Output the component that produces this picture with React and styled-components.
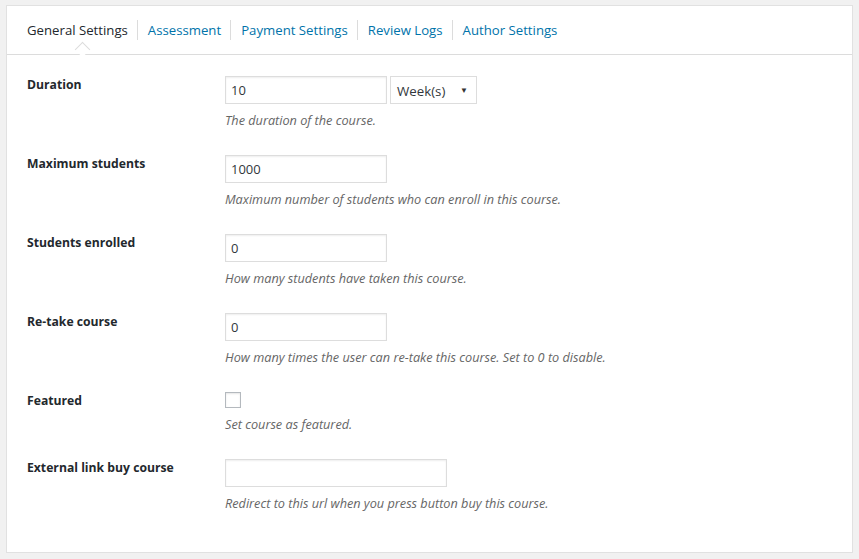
import React from "react";
import styled, { createGlobalStyle } from "styled-components";

const GlobalStyle = createGlobalStyle`
  html, body {
    margin: 0;
    padding: 0;
    background: #f1f1f1;
    font-family: "Open Sans", "Noto Sans", sans-serif;
  }
`;

const Page = styled.div`
  padding: 5px 6px 0 6px;
  width: 847px;
`;

const Box = styled.div`
  background: #fff;
  border: 1px solid #e1e1e1;
  height: 546px;
  box-sizing: content-box;
`;

const Tabs = styled.ul`
  display: flex;
  align-items: center;
  margin: 0;
  padding: 0 0 0 20px;
  height: 48px;
  border-bottom: 1px solid #dcdcdc;
  list-style: none;
`;

const Tab = styled.li`
  position: relative;
  font-size: 13.2px;
  line-height: 20px;
  padding: 0 ${(p) => (p.$last ? 0 : 9)}px 0 ${(p) => (p.$first ? 0 : 10)}px;
  border-left: ${(p) => (p.$first ? "none" : "1px solid #dcdcdc")};
  color: ${(p) => (p.$active ? "#23282d" : "#0073aa")};
  cursor: pointer;
`;

const Notch = styled.span`
  position: absolute;
  left: 50%;
  bottom: -15px;
  width: 10px;
  height: 10px;
  margin-left: -5px;
  background: #fff;
  border-left: 1px solid #dcdcdc;
  border-top: 1px solid #dcdcdc;
  transform: rotate(45deg);
`;

const Form = styled.div`
  padding: 9px 20px 0 20px;
`;

const Row = styled.div`
  display: grid;
  grid-template-columns: 198px 1fr;
  padding: 12px 0 13px 0;
`;

const Label = styled.div`
  font-size: 12.2px;
  font-weight: 700;
  line-height: 16px;
  color: #23282d;
  padding-top: 1px;
`;

const Field = styled.div`
  display: flex;
  flex-direction: column;
  align-items: flex-start;
`;

const Controls = styled.div`
  display: flex;
  gap: 3px;
`;

const Input = styled.div`
  box-sizing: border-box;
  width: ${(p) => p.$w}px;
  height: 28px;
  border: 1px solid #dddddd;
  box-shadow: inset 0 1px 2px rgba(0, 0, 0, 0.07);
  padding: 0 5px;
  font-size: 13px;
  line-height: 27px;
  color: #32373c;
  background: #fff;
`;

const Select = styled.div`
  box-sizing: border-box;
  width: 87px;
  height: 28px;
  border: 1px solid #dddddd;
  padding: 1px 8px 0 6px;
  display: flex;
  align-items: center;
  justify-content: space-between;
  font-size: 13.3px;
  color: #32373c;
  background: #fff;
`;

const Caret = styled.span`
  font-size: 8px;
  color: #333;
  margin-top: -3px;
`;

const Checkbox = styled.div`
  box-sizing: border-box;
  width: 16px;
  height: 16px;
  border: 1px solid #b4b9be;
  box-shadow: inset 0 1px 2px rgba(0, 0, 0, 0.1);
  background: #fff;
`;

const Desc = styled.p`
  margin: 7px 0 0 0;
  font-size: 12.7px;
  line-height: 19px;
  font-style: italic;
  color: #666;
`;

const tabs = [
  "General Settings",
  "Assessment",
  "Payment Settings",
  "Review Logs",
  "Author Settings",
];

const fields = [
  { label: "Maximum students", value: "1000", desc: "Maximum number of students who can enroll in this course." },
  { label: "Students enrolled", value: "0", desc: "How many students have taken this course." },
  { label: "Re-take course", value: "0", desc: "How many times the user can re-take this course. Set to 0 to disable." },
];

const App = () => {
  return (
    <Page>
      <GlobalStyle />
      <Box>
        <Tabs>
          {tabs.map((t, i) => (
            <Tab key={t} $first={i === 0} $last={i === tabs.length - 1} $active={i === 0}>
              {t}
              {i === 0 && <Notch />}
            </Tab>
          ))}
        </Tabs>
        <Form>
          <Row>
            <Label>Duration</Label>
            <Field>
              <Controls>
                <Input $w={162}>10</Input>
                <Select>
                  Week(s)
                  <Caret>▼</Caret>
                </Select>
              </Controls>
              <Desc>The duration of the course.</Desc>
            </Field>
          </Row>
          {fields.map((f) => (
            <Row key={f.label}>
              <Label>{f.label}</Label>
              <Field>
                <Input $w={162}>{f.value}</Input>
                <Desc>{f.desc}</Desc>
              </Field>
            </Row>
          ))}
          <Row>
            <Label>Featured</Label>
            <Field>
              <Checkbox />
              <Desc>Set course as featured.</Desc>
            </Field>
          </Row>
          <Row>
            <Label>External link buy course</Label>
            <Field>
              <Input $w={222} />
              <Desc>Redirect to this url when you press button buy this course.</Desc>
            </Field>
          </Row>
        </Form>
      </Box>
    </Page>
  );
};

export default App;
